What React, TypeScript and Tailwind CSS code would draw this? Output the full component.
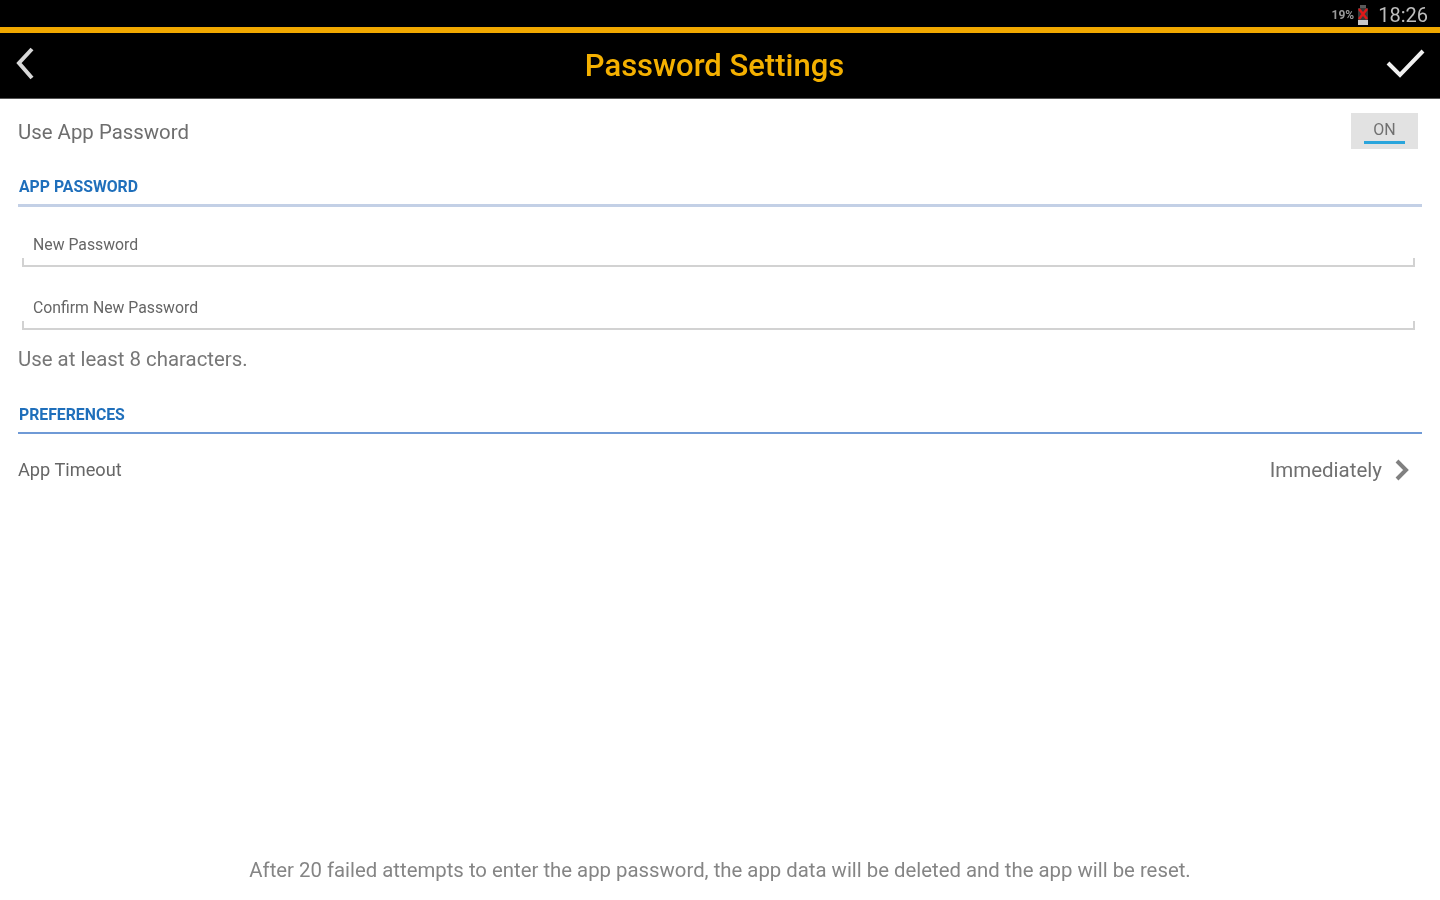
const font = { fontFamily: "Roboto, sans-serif" };

function SectionHead({ label, lineColor }: { label: string; lineColor: string }) {
  return (
    <div className="ml-[18px] mr-[18px]">
      <div className="pl-[1px] h-[18px] text-[15.8px] leading-[18px] font-bold text-[#1f6fbb]">{label}</div>
      <div className={`mt-[8px] ${lineColor}`} />
    </div>
  );
}

function Field({ label }: { label: string }) {
  return (
    <div className="ml-[22px] mr-[25px] h-[63px] flex flex-col justify-end">
      <div className="pl-[11px] text-[15.8px] leading-[18px] text-[#666666] mb-[4px]">{label}</div>
      <div className="h-[9px] border-x-2 border-b-2 border-[#d2d2d2]" />
    </div>
  );
}

export default function App() {
  return (
    <div className="w-[1440px] h-[900px] bg-white flex flex-col overflow-hidden blur-[0.6px]" style={font}>
      {/* status bar */}
      <div className="h-[27px] bg-black flex items-center justify-end pr-[12px] pt-[3px]">
        <span className="text-[12px] font-bold text-[#9a9a9a] mr-[2px]">19%</span>
        <svg width="14" height="22" viewBox="0 0 14 22" className="mr-[8px] mt-[2px]">
          <rect x="4" y="0" width="6" height="3" fill="#5a5a5a" />
          <rect x="2" y="3" width="10" height="12" fill="#3a3a3a" />
          <path d="M3 4 L11 14 M11 4 L3 14" stroke="#e01818" strokeWidth="2.5" />
          <rect x="2" y="15" width="10" height="5" fill="#c8c8c8" />
        </svg>
        <span className="text-[20px] leading-none text-[#bdbdbd]">18:26</span>
      </div>
      <div className="h-[6px] bg-[#f0a800]" />

      {/* title bar */}
      <div className="h-[66px] bg-black flex items-center justify-between border-b border-[#555555]">
        <svg width="50" height="60" viewBox="0 0 50 60">
          <path d="M32 13 L19 27 L32 42" fill="none" stroke="#d8d8d8" strokeWidth="4" />
        </svg>
        <div className="text-[31px] font-medium leading-none text-[#f4b000]">Password Settings</div>
        <svg width="50" height="60" viewBox="0 0 50 60" className="mr-[11px]">
          <path d="M9 27 L21 39 L44 15" fill="none" stroke="#f0f0f0" strokeWidth="4" />
        </svg>
      </div>

      {/* use app password */}
      <div className="h-[79px] pl-[18px] pr-[22px] flex items-start justify-between">
        <span className="mt-[18px] text-[20.4px] leading-[30px] text-[#6e6e6e]">Use App Password</span>
        <div className="mt-[14px] w-[67px] h-[36px] bg-[#e2e2e2] flex flex-col items-center pt-[9px]">
          <span className="text-[16px] leading-[16px] text-[#707070]">ON</span>
          <div className="mt-[3px] w-[41px] h-[3px] bg-[#2aa5dc]" />
        </div>
      </div>

      <SectionHead label="APP PASSWORD" lineColor="h-[3px] bg-[#c3d0e6]" />
      <div className="-mt-[3px]">
        <Field label="New Password" />
        <Field label="Confirm New Password" />
      </div>
      <div className="mx-[18px] mt-[14px] text-[20.4px] leading-[30px] text-[#777777]">Use at least 8 characters.</div>

      <div className="mt-[32px]">
        <SectionHead label="PREFERENCES" lineColor="h-[2px] bg-[#6f9ad6]" />
      </div>

      <div className="h-[72px] pl-[18px] pr-[30px] flex items-center justify-between">
        <span className="text-[18.2px] text-[#666666]">App Timeout</span>
        <div className="flex items-center gap-[12px]">
          <span className="text-[20.5px] text-[#707070]">Immediately</span>
          <svg width="16" height="22" viewBox="0 0 16 22">
            <path d="M3 2 L12 11 L3 20" fill="none" stroke="#808080" strokeWidth="4" />
          </svg>
        </div>
      </div>

      <div className="flex-1 flex items-end justify-center pb-[16px]">
        <span className="text-[20.35px] leading-[28px] text-[#858585]">
          After 20 failed attempts to enter the app password, the app data will be deleted and the app will be reset.
        </span>
      </div>
    </div>
  );
}
